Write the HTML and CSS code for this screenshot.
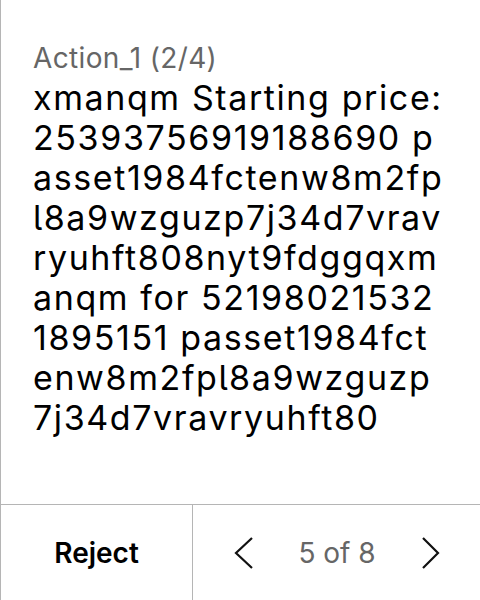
FILE: index.html
```html
<!DOCTYPE html>
<html>
<head>
<meta charset="utf-8">
<link rel="stylesheet" href="styles.css">
</head>
<body>
<div class="card">
  <div class="content">
    <div class="title">Action_1 (2/4)</div>
    <div class="message">
      <span class="line">xmanqm Starting price:</span>
      <span class="line">25393756919188690 p</span>
      <span class="line">asset1984fctenw8m2fp</span>
      <span class="line">l8a9wzguzp7j34d7vrav</span>
      <span class="line">ryuhft808nyt9fdggqxm</span>
      <span class="line">anqm for 52198021532</span>
      <span class="line">1895151 passet1984fct</span>
      <span class="line">enw8m2fpl8a9wzguzp</span>
      <span class="line">7j34d7vravryuhft80</span>
    </div>
  </div>
  <div class="footer">
    <div class="reject">Reject</div>
    <div class="pager">
      <svg class="chev" width="20" height="36" viewBox="0 0 20 36"><path d="M18 3 L2 18 L18 33" fill="none" stroke="#111" stroke-width="2.2"/></svg>
      <span class="count">5 of 8</span>
      <svg class="chev" width="20" height="36" viewBox="0 0 20 36"><path d="M3 3 L18 18 L3 33" fill="none" stroke="#111" stroke-width="2.2"/></svg>
    </div>
  </div>
</div>
</body>
</html>
```
FILE: styles.css
```css
html, body { margin: 0; padding: 0; background: #fff; }
body { font-family: Inter, "Noto Sans", sans-serif; color: #000; font-feature-settings: "cv05"; }
.card {
  width: 480px; height: 600px; box-sizing: border-box;
  border-left: 1px solid #b5b5b5;
  display: flex; flex-direction: column;
}
.content { flex: 1; padding: 40px 32px 0 32px; }
.title { font-size: 28px; color: #666; line-height: 36px; letter-spacing: 0.35px; }
.message {
  font-size: 34px; line-height: 40px; margin-top: 2px; letter-spacing: 1.6px;
  display: flex; flex-direction: column;
}
.line { white-space: nowrap; }
.footer {
  height: 96px; border-top: 1px solid #b5b5b5; box-sizing: border-box;
  display: flex;
}
.reject {
  width: 191px; border-right: 1px solid #b5b5b5;
  display: flex; align-items: center; justify-content: center;
  font-size: 28px; font-weight: 600;
}
.pager { flex: 1; display: flex; align-items: center; justify-content: space-between; padding: 0 40px 0 41px; }
.count { font-size: 28px; color: #666; }
```
